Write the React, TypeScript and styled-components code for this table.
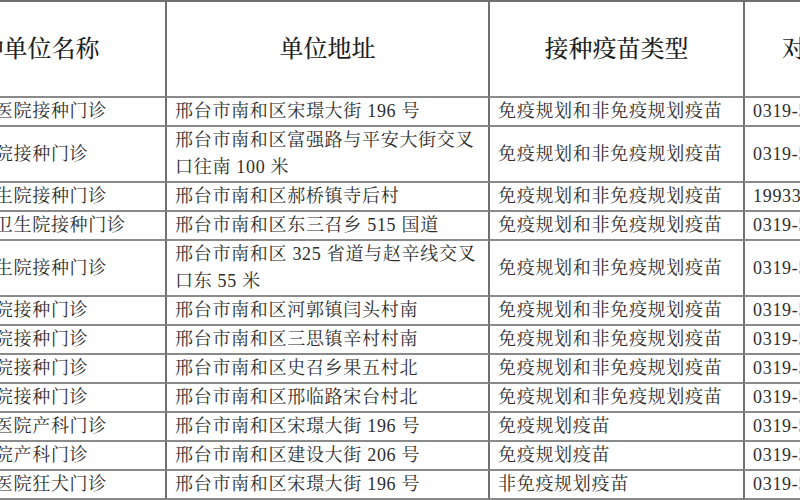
import React from "react";
import styled, { createGlobalStyle } from "styled-components";

type Row = {
	name: string;
	addr: string[];
	type: string;
	phone: string;
};

const rows: Row[] = [
	{ name: "南和区中医院接种门诊", addr: ["邢台市南和区宋璟大街 196 号"], type: "免疫规划和非免疫规划疫苗", phone: "0319-5201196" },
	{ name: "南和镇医院接种门诊", addr: ["邢台市南和区富强路与平安大街交叉", "口往南 100 米"], type: "免疫规划和非免疫规划疫苗", phone: "0319-5202120" },
	{ name: "郝桥镇卫生院接种门诊", addr: ["邢台市南和区郝桥镇寺后村"], type: "免疫规划和非免疫规划疫苗", phone: "19933196680" },
	{ name: "东三召乡卫生院接种门诊", addr: ["邢台市南和区东三召乡 515 国道"], type: "免疫规划和非免疫规划疫苗", phone: "0319-5321006" },
	{ name: "贾宋镇卫生院接种门诊", addr: ["邢台市南和区 325 省道与赵辛线交叉", "口东 55 米"], type: "免疫规划和非免疫规划疫苗", phone: "0319-5381120" },
	{ name: "河郭镇医院接种门诊", addr: ["邢台市南和区河郭镇闫头村南"], type: "免疫规划和非免疫规划疫苗", phone: "0319-5361021" },
	{ name: "三思镇医院接种门诊", addr: ["邢台市南和区三思镇辛村村南"], type: "免疫规划和非免疫规划疫苗", phone: "0319-5341120" },
	{ name: "史召乡医院接种门诊", addr: ["邢台市南和区史召乡果五村北"], type: "免疫规划和非免疫规划疫苗", phone: "0319-5351003" },
	{ name: "和阳镇医院接种门诊", addr: ["邢台市南和区邢临路宋台村北"], type: "免疫规划和非免疫规划疫苗", phone: "0319-5311120" },
	{ name: "南和区中医院产科门诊", addr: ["邢台市南和区宋璟大街 196 号"], type: "免疫规划疫苗", phone: "0319-5201185" },
	{ name: "妇幼保健院产科门诊", addr: ["邢台市南和区建设大街 206 号"], type: "免疫规划疫苗", phone: "0319-5206120" },
	{ name: "南和区中医院狂犬门诊", addr: ["邢台市南和区宋璟大街 196 号"], type: "非免疫规划疫苗", phone: "0319-5201190" },
];

const headers = ["接种单位名称", "单位地址", "接种疫苗类型", "对外咨询电话"];
const widths = [255, 323, 255, 220];

export default function App() {
	return (
		<>
			<GlobalStyle />
			<Frame>
				<Sheet>
					<colgroup>
						{widths.map((w, i) => (
							<Col key={i} $w={w} />
						))}
					</colgroup>
					<thead>
						<tr>
							{headers.map((h) => (
								<HeadCell key={h}>{h}</HeadCell>
							))}
						</tr>
					</thead>
					<tbody>
						{rows.map((r, i) => (
							<tr key={i}>
								<Cell>{r.name}</Cell>
								<Cell>
									{r.addr.map((line, j) => (
										<Line key={j}>{line}</Line>
									))}
								</Cell>
								<Cell>{r.type}</Cell>
								<Cell>{r.phone}</Cell>
							</tr>
						))}
					</tbody>
				</Sheet>
			</Frame>
		</>
	);
}

/* ================= styled ================ */

const GlobalStyle = createGlobalStyle`
	html, body {
		margin: 0;
		padding: 0;
		background: #fff;
	}
`;

const Frame = styled.div`
	width: 800px;
	height: 500px;
	overflow: hidden;
	background: #fff;
`;

const Sheet = styled.table`
	table-layout: fixed;
	border-collapse: separate;
	border-spacing: 0;
	width: 1053px;
	margin-left: -90px;
	border-top: 2px solid #707070;
	font-family: "Liberation Serif", "Noto Serif CJK SC", "Noto Sans CJK SC", serif;
	color: #2e2e2e;
`;

const Col = styled.col<{ $w: number }>`
	width: ${({ $w }) => $w}px;
`;

const HeadCell = styled.th`
	padding: 0;
	line-height: 94px;
	font-size: 24px;
	font-weight: 500;
	color: #1f1f1f;
	text-align: center;
	vertical-align: middle;
	white-space: nowrap;
	overflow: hidden;
	border-left: 2px solid #707070;
	border-bottom: 2px solid #8a8a8a;

	&:first-child {
		padding-right: 22px;
	}
`;

const Cell = styled.td`
	padding: 0 0 0 8px;
	line-height: 27px;
	font-size: 18px;
	letter-spacing: 0.7px;
	text-align: left;
	vertical-align: middle;
	white-space: nowrap;
	overflow: hidden;
	border-left: 2px solid #707070;
	border-bottom: 2px solid #8a8a8a;
`;

const Line = styled.div`
	white-space: nowrap;
`;
